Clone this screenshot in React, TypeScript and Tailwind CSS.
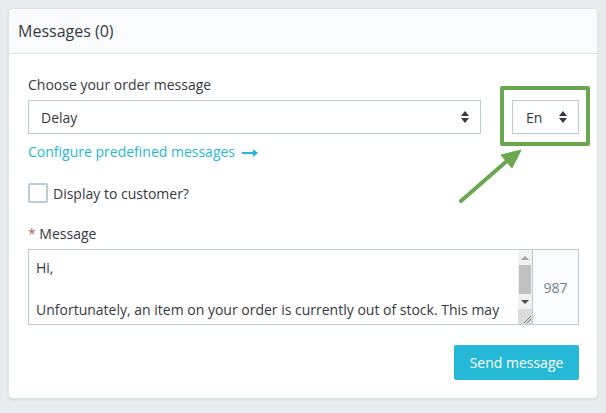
import React from "react";

function SortIcon() {
  return (
    <svg width="8" height="12" viewBox="0 0 8 12" className="block">
      <polygon points="4,0 8,5 0,5" fill="#363a41" />
      <polygon points="0,7 8,7 4,12" fill="#363a41" />
    </svg>
  );
}

const MESSAGE =
  "Hi,\n\nUnfortunately, an item on your order is currently out of stock. This may cause a slight delay in delivery.";

export default function App() {
  return (
    <div
      className="relative w-[606px] h-[413px] bg-[#eaebec] pt-[8px] pl-[8px] overflow-hidden text-[#363a41]"
      style={{ fontFamily: '"Open Sans", "Noto Sans", sans-serif' }}
    >
      <div className="w-[590px] h-[391px] bg-white border border-[#dbe6e9] rounded-[5px] shadow-[0_1px_2px_rgba(0,0,0,0.08)] overflow-hidden flex flex-col">
        <div className="h-[45px] shrink-0 bg-[#fafbfc] border-b border-[#dbe6e9] flex items-center pl-[9px] text-[16px] leading-none">
          Messages (0)
        </div>
        <div className="pl-[19px] pr-[18px] pt-[20px] flex flex-col">
          <div className="text-[14px] leading-[21px] mb-[5px]">Choose your order message</div>
          <div className="flex items-center">
            <div className="w-[453px] h-[34px] border border-[#bbcdd2] flex items-center justify-between pl-[12px] pr-[11px] text-[14px]">
              <span>Delay</span>
              <SortIcon />
            </div>
            <div className="ml-[31px] w-[67px] h-[34px] border border-[#bbcdd2] flex items-center justify-between pl-[13px] pr-[11px] text-[14px]">
              <span>En</span>
              <SortIcon />
            </div>
          </div>
          <div className="mt-[7px] flex items-center text-[14px] leading-[21px] text-[#25b9d7]">
            <span>Configure predefined messages</span>
            <svg width="16" height="8" viewBox="0 0 16 8" className="ml-[7px] mt-[2px]">
              <rect x="0" y="3" width="12" height="2" fill="#25b9d7" />
              <polygon points="11,0 16,4 11,8" fill="#25b9d7" />
            </svg>
          </div>
          <div className="mt-[21px] flex items-center h-[20px]">
            <div className="w-[20px] h-[20px] border-2 border-[#bbcdd2] rounded-[2px] bg-white" />
            <span className="ml-[5px] text-[14px] leading-[21px]">Display to customer?</span>
          </div>
          <div className="mt-[20px] text-[14px] leading-[21px] mb-[5px]">
            <span className="text-[#c05c67]">*</span> Message
          </div>
          <div className="h-[76px] border border-[#bbcdd2] flex">
            <div className="flex-1 overflow-hidden pl-[7px] pr-[8px] pt-[7px] text-[14px] leading-[21px] whitespace-pre-wrap">
              {MESSAGE}
            </div>
            <div className="w-[14px] bg-[#f1f1f1] flex flex-col">
              <div className="h-[15px] flex items-center justify-center">
                <svg width="8" height="4" viewBox="0 0 8 4">
                  <polygon points="4,0 8,4 0,4" fill="#a3a3a3" />
                </svg>
              </div>
              <div className="h-[29px] mx-[1px] bg-[#c1c1c1]" />
              <div className="h-[15px] flex items-center justify-center">
                <svg width="8" height="4" viewBox="0 0 8 4">
                  <polygon points="0,0 8,0 4,4" fill="#505050" />
                </svg>
              </div>
              <div className="flex-1 bg-[#dcdcdc] flex items-end justify-end p-[1px]">
                <svg width="8" height="8" viewBox="0 0 8 8">
                  <line x1="1" y1="8" x2="8" y2="1" stroke="#7a7a7a" strokeWidth="1" />
                  <line x1="4" y1="8" x2="8" y2="4" stroke="#7a7a7a" strokeWidth="1" />
                </svg>
              </div>
            </div>
            <div className="w-[46px] border-l border-[#bbcdd2] bg-[#fafbfc] flex items-center justify-center text-[14px] text-[#6c868e]">
              987
            </div>
          </div>
          <div className="mt-[20px] flex justify-end">
            <div className="w-[125px] h-[35px] bg-[#25b9d7] rounded-[2px] text-white text-[14px] flex items-center justify-center">
              Send message
            </div>
          </div>
        </div>
      </div>

      <div className="absolute left-[500px] top-[86px] w-[90px] h-[60px] border-4 border-[#6aa84f] rounded-[2px]" />
      <svg className="absolute left-0 top-0 pointer-events-none" width="606" height="413" viewBox="0 0 606 413">
        <line x1="461" y1="201" x2="508" y2="160" stroke="#6aa84f" strokeWidth="4" strokeLinecap="round" />
        <polygon points="521,150 501,155 512,168" fill="#6aa84f" stroke="#6aa84f" strokeWidth="1" strokeLinejoin="round" />
      </svg>
    </div>
  );
}
